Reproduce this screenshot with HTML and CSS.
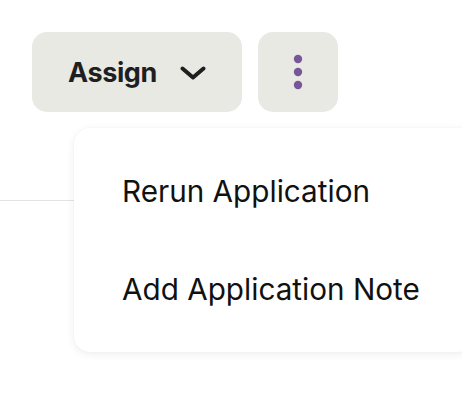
FILE: index.html
```html
<!DOCTYPE html>
<html lang="en">
<head>
<meta charset="utf-8">
<title>Actions</title>
<link rel="stylesheet" href="styles.css">
</head>
<body>
<div class="page">
  <div class="toolbar">
    <button class="btn btn-assign">
      <span class="btn-label">Assign</span>
      <svg class="chevron" width="26" height="14" viewBox="0 0 26 14" aria-hidden="true">
        <path d="M2.5 2.5 L13 11.5 L23.5 2.5" fill="none" stroke="#1f1f1f" stroke-width="4" stroke-linecap="round" stroke-linejoin="round"/>
      </svg>
    </button>
    <button class="btn btn-more" aria-label="More actions">
      <svg width="10" height="36" viewBox="0 0 10 36" aria-hidden="true">
        <circle cx="5" cy="5" r="4.2" fill="#765898"/>
        <circle cx="5" cy="18" r="4.2" fill="#765898"/>
        <circle cx="5" cy="31" r="4.2" fill="#765898"/>
      </svg>
    </button>
  </div>
  <div class="divider"></div>
  <div class="menu">
    <div class="menu-item">Rerun Application</div>
    <div class="menu-item">Add Application Note</div>
  </div>
</div>
</body>
</html>
```
FILE: styles.css
```css
html, body {
  margin: 0;
  padding: 0;
  background: #ffffff;
}
.page {
  position: relative;
  width: 462px;
  height: 394px;
  overflow: hidden;
  font-family: Inter, "Liberation Sans", sans-serif;
}
.toolbar {
  display: flex;
  gap: 16px;
  padding: 32px 0 0 32px;
}
.btn {
  border: none;
  background: #e9e9e4;
  border-radius: 15px;
  height: 80px;
  display: flex;
  align-items: center;
  justify-content: center;
  padding: 0;
  font-family: inherit;
}
.btn-assign {
  width: 210px;
  gap: 23px;
}
.btn-label {
  font-size: 27px;
  font-weight: 700;
  color: #1f1f1f;
  letter-spacing: -0.4px;
}
.chevron {
  display: block;
  margin-top: 1px;
}
.btn-more {
  width: 80px;
}
.btn-more svg {
  display: block;
}
.divider {
  margin-top: 88px;
  height: 1px;
  background: #e3e3e3;
}
.menu {
  position: absolute;
  left: 74px;
  top: 128px;
  width: 400px;
  padding: 14px 0;
  background: #ffffff;
  border-radius: 16px;
  box-shadow: 0 2px 10px rgba(0, 0, 0, 0.07), 0 0 2px rgba(0, 0, 0, 0.04);
}
.menu-item {
  height: 98px;
  display: flex;
  align-items: center;
  padding-left: 48px;
  font-size: 29.7px;
  color: #111111;
}
```
